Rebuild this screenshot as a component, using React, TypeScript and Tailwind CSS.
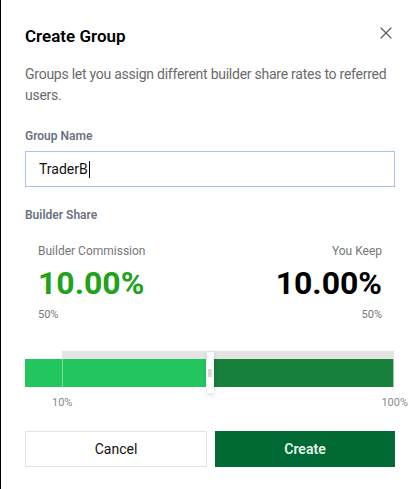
import React from 'react';
import { X } from 'lucide-react';

export default function App() {
  return (
    <div
      className="w-[416px] h-[489px] bg-white border-l border-black pl-[24px] pr-[21px] pt-[24px] relative"
      style={{ fontFamily: 'Roboto, "Liberation Sans", sans-serif' }}
    >
      {/* Header */}
      <div className="flex items-center justify-between">
        <h2 className="text-[17px] leading-[24px] font-semibold text-black">Create Group</h2>
        <button className="text-[#555] -mt-[6px] -mr-[1px]">
          <X size={20} strokeWidth={1.3} />
        </button>
      </div>

      <p className="mt-[16px] text-[14px] leading-[21px] tracking-[-0.25px] text-[#6b6b6b]">
        Groups let you assign different builder share rates to referred users.
      </p>

      {/* Group name */}
      <div className="mt-[22px] text-[12px] leading-[16px] font-semibold text-[#6b7280]">Group Name</div>
      <div className="mt-[7px] h-[36px] border border-[#a9c4f2] flex items-center pl-[13px]">
        <span className="text-[14px] text-[#111]">TraderB</span>
        <span className="w-px h-[17px] bg-black ml-px" />
      </div>

      {/* Builder share */}
      <div className="mt-[20px] text-[12px] leading-[16px] font-semibold text-[#6b7280]">Builder Share</div>

      <div className="mt-[20px] px-[13px] flex justify-between">
        <div>
          <div className="text-[12px] leading-[16px] text-[#777]">Builder Commission</div>
          <div className="mt-[4px] text-[32px] leading-[40px] font-bold text-[#22a11a]">10.00%</div>
          <div className="mt-[4px] text-[11px] leading-[16px] text-[#777]">50%</div>
        </div>
        <div className="text-right">
          <div className="text-[12px] leading-[16px] text-[#777]">You Keep</div>
          <div className="mt-[4px] text-[32px] leading-[40px] font-bold text-black">10.00%</div>
          <div className="mt-[4px] text-[11px] leading-[16px] text-[#777]">50%</div>
        </div>
      </div>

      {/* Slider */}
      <div className="mt-[28px] relative h-[42px] w-[369px]">
        <div className="ml-[37px] h-[8px] bg-[#e4e4e4]" />
        <div className="flex h-[28px]">
          <div className="w-[181px] bg-[#22c55e]" />
          <div className="w-[8px]" />
          <div className="flex-1 bg-[#17803d] border-r border-[#9fc9ae]" />
        </div>
        <div className="absolute left-[37px] top-[8px] w-px h-[28px] bg-[#7fdca1]" />
        <div className="absolute left-[182px] top-[1px] w-[7px] h-[41px] bg-white shadow-[0_2px_5px_rgba(0,0,0,0.15)] flex items-center">
          <div className="ml-[1px] w-[4px] h-[8px] bg-[#d9d9d9]" />
        </div>
      </div>
      <div className="mt-[3px] flex justify-between -mr-[13px] text-[11px] leading-[14px] text-[#8a8a8a]">
        <span className="ml-[27px]">10%</span>
        <span>100%</span>
      </div>

      {/* Actions */}
      <div className="mt-[21px] flex gap-[8px] w-[370px]">
        <button className="flex-1 h-[36px] border border-[#e3e3e3] text-[14px] text-[#111]">Cancel</button>
        <button className="flex-1 h-[36px] bg-[#006934] text-[14px] font-semibold text-[#e8f3ec]">Create</button>
      </div>
    </div>
  );
}
